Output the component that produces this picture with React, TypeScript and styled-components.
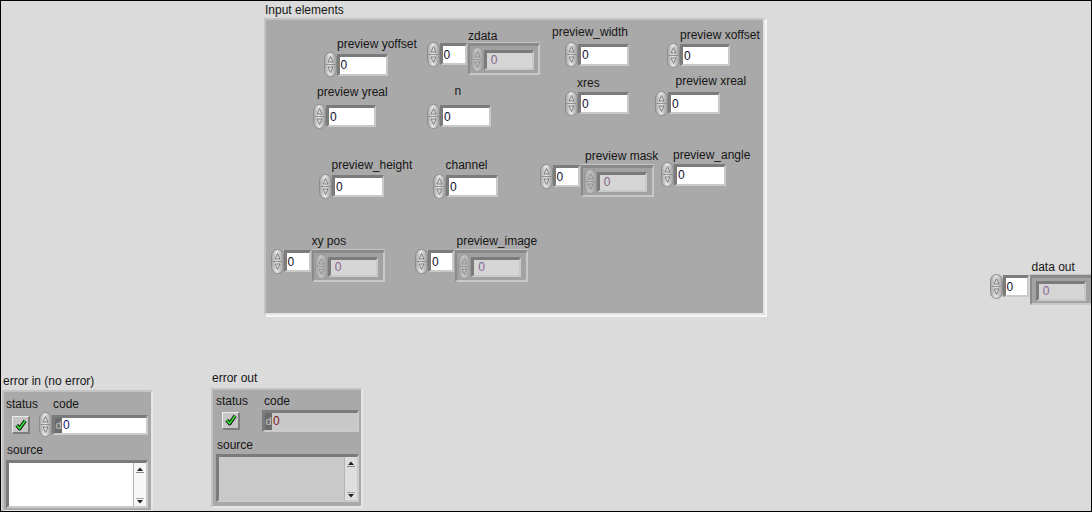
import styled, { createGlobalStyle } from "styled-components";

const GlobalStyle = createGlobalStyle`
  html, body {
    margin: 0;
    padding: 0;
    background: #dbdbdb;
  }
  body {
    font-family: "Liberation Sans", Arial, sans-serif;
  }
`;

const Window = styled.div`
  position: relative;
  width: 1092px;
  height: 512px;
  box-sizing: border-box;
  border: 1px solid #000;
  background: #dbdbdb;
  overflow: hidden;
  font-family: "Liberation Sans", Arial, sans-serif;
  font-size: 12px;
  color: #161616;
`;

// front panel objects sit on a free canvas, like LabVIEW does
const Placed = styled.div<{ $x: number; $y: number }>`
  position: absolute;
  left: ${(p) => p.$x}px;
  top: ${(p) => p.$y}px;
  display: flex;
  flex-direction: column;
  align-items: flex-start;
`;

const Caption = styled.span<{ $dx?: number; $gap?: number; $top?: number }>`
  display: block;
  line-height: 14px;
  white-space: nowrap;
  margin-left: ${(p) => p.$dx ?? 0}px;
  margin-top: ${(p) => p.$top ?? 0}px;
  margin-bottom: ${(p) => p.$gap ?? 0}px;
`;

const PanelFrame = styled.div<{ $w: number; $h: number }>`
  position: relative;
  box-sizing: border-box;
  width: ${(p) => p.$w}px;
  height: ${(p) => p.$h}px;
  background: #a9a9a9;
  border-style: solid;
  border-width: 2px;
  border-color: #c3c3c3 #e3e3e3 #e3e3e3 #c3c3c3;
  box-shadow: 2px 2px 0 #f6f6f6;
`;

const SpinRow = styled.div<{ $dx?: number; $dy?: number }>`
  display: flex;
  align-items: center;
  margin-left: ${(p) => p.$dx ?? 0}px;
  margin-top: ${(p) => p.$dy ?? 0}px;
`;

const ArrayRow = styled.div<{ $dx: number; $dy: number }>`
  display: flex;
  align-items: flex-start;
  gap: 1px;
  margin-left: ${(p) => p.$dx}px;
  margin-top: ${(p) => p.$dy}px;
`;

const ArrayFrame = styled.div<{ $w: number; $h: number; $pad: number }>`
  box-sizing: border-box;
  width: ${(p) => p.$w}px;
  height: ${(p) => p.$h}px;
  margin-top: 1.5px;
  flex-shrink: 0;
  display: flex;
  align-items: center;
  padding-left: ${(p) => p.$pad}px;
  background: #a2a2a2;
  border-style: solid;
  border-width: 3px 2px 2px 2px;
  border-color: #8a8a8a #c8c8c8 #c8c8c8 #8a8a8a;
  box-shadow: 0 -1px 0 #c2c2c2;
`;

const NumBox = styled.div<{ $w: number; $h?: number; $dim?: boolean }>`
  box-sizing: border-box;
  width: ${(p) => p.$w}px;
  height: ${(p) => p.$h ?? 22}px;
  flex-shrink: 0;
  display: flex;
  align-items: center;
  padding-left: 1px;
  border-style: solid;
  border-width: 3px 2px 2px 3px;
  border-color: #7b7b7b #c9c9c9 #c9c9c9 #7b7b7b;
  background: ${(p) => (p.$dim ? "#d5d5d5" : "#ffffff")};
  color: ${(p) => (p.$dim ? "#86638e" : "#10102e")};
  font-size: 12px;
`;

const SpinSvg = styled.svg<{ $dim?: boolean }>`
  display: block;
  flex-shrink: 0;
  opacity: ${(p) => (p.$dim ? 0.5 : 1)};
`;

const ClusterFrame = styled.div<{ $w: number; $h: number; $indicator?: boolean }>`
  box-sizing: border-box;
  width: ${(p) => p.$w}px;
  height: ${(p) => p.$h}px;
  background: #a9a9a9;
  border-style: solid;
  border-width: 2px;
  border-color: #c3c3c3 #e6e6e6 #e6e6e6 #c3c3c3;
  padding: ${(p) => (p.$indicator ? "4px 2px" : "5px 2px")};
`;

const TopRow = styled.div<{ $col: number }>`
  display: grid;
  grid-template-columns: ${(p) => p.$col}px 1fr;
  align-items: start;
`;

const Cell = styled.div`
  display: flex;
  flex-direction: column;
  align-items: flex-start;
`;

const CheckBox = styled.div<{ $dx: number; $dy: number }>`
  box-sizing: border-box;
  width: 18px;
  height: 18px;
  margin-left: ${(p) => p.$dx}px;
  margin-top: ${(p) => p.$dy}px;
  display: flex;
  align-items: center;
  justify-content: center;
  background: #c6c6c6;
  border-style: solid;
  border-width: 1px 2px 2px 1px;
  border-color: #ececec #7d7d7d #7d7d7d #ececec;
`;

const CodeBox = styled.div<{ $w: number; $h: number; $indicator?: boolean }>`
  box-sizing: border-box;
  width: ${(p) => p.$w}px;
  height: ${(p) => p.$h}px;
  display: flex;
  align-items: stretch;
  border-style: solid;
  border-width: 3px 2px 2px 3px;
  border-color: #7b7b7b #cbcbcb #cbcbcb #7b7b7b;
  background: ${(p) => (p.$indicator ? "#c8c8c8" : "#ffffff")};
`;

const Radix = styled.span`
  width: 7px;
  display: flex;
  align-items: center;
  justify-content: center;
  background: #6b6b6b;
  color: #c4c4c4;
  font-size: 11px;
`;

const CodeValue = styled.span<{ $indicator?: boolean }>`
  display: flex;
  align-items: center;
  padding-left: 1px;
  color: ${(p) => (p.$indicator ? "#7a1c1c" : "#141470")};
`;

const SourceBox = styled.div<{ $w: number; $h: number; $dx: number; $indicator?: boolean }>`
  box-sizing: border-box;
  width: ${(p) => p.$w}px;
  height: ${(p) => p.$h}px;
  margin-left: ${(p) => p.$dx}px;
  display: flex;
  justify-content: flex-end;
  border-style: solid;
  border-width: 3px 2px 2px 3px;
  border-color: #7b7b7b #cbcbcb #cbcbcb #7b7b7b;
  background: ${(p) => (p.$indicator ? "#c9c9c9" : "#ffffff")};
`;

const ScrollBar = styled.div<{ $indicator?: boolean }>`
  width: 13px;
  box-sizing: border-box;
  display: flex;
  flex-direction: column;
  justify-content: space-between;
  align-items: center;
  padding: 4px 0 2px;
  border-left: 1px solid #b4b4b4;
  background: ${(p) => (p.$indicator ? "#dedede" : "#f6f6f6")};
`;

function Spinner({ dim }: { dim?: boolean }) {
  return (
    <SpinSvg width="13" height="25" viewBox="0 0 13 25" $dim={dim}>
      <defs>
        <linearGradient id="spinFill" x1="0" y1="0" x2="1" y2="0">
          <stop offset="0" stopColor="#a4a4a4" />
          <stop offset="0.45" stopColor="#e8e8e8" />
          <stop offset="1" stopColor="#9a9a9a" />
        </linearGradient>
      </defs>
      <rect x="0.5" y="0.5" width="12" height="24" rx="6" fill="url(#spinFill)" stroke="#8c8c8c" />
      <path d="M1.5 12.5 H11.5" stroke="#909090" />
      <path d="M6.5 4.5 L9 10 H4 Z" fill="#dadada" stroke="#6a6a6a" strokeWidth="0.8" />
      <path d="M6.5 20.5 L9 15 H4 Z" fill="#dadada" stroke="#6a6a6a" strokeWidth="0.8" />
    </SpinSvg>
  );
}

function Check() {
  return (
    <svg width="12" height="12" viewBox="0 0 12 12">
      <path d="M1.8 6.2 L4.6 9.6 L10.2 1.8" fill="none" stroke="#0b0b0b" strokeWidth="3.6" strokeLinejoin="round" />
      <path d="M1.8 6.2 L4.6 9.6 L10.2 1.8" fill="none" stroke="#34e034" strokeWidth="1.8" strokeLinejoin="round" />
    </svg>
  );
}

function Arrow({ down }: { down?: boolean }) {
  return (
    <svg width="8" height="6" viewBox="0 0 8 6">
      {down ? (
        <>
          <path d="M0 0 H8" stroke="#8a8a8a" strokeWidth="1.5" />
          <path d="M1 2 H7 L4 5.5 Z" fill="#222" />
        </>
      ) : (
        <>
          <path d="M1 4 H7 L4 0.5 Z" fill="#222" />
          <path d="M0 5.5 H8" stroke="#8a8a8a" strokeWidth="1" />
        </>
      )}
    </svg>
  );
}

type Origin = { ox: number; oy: number };

type NumericSpec = {
  label: string;
  lx: number; // label left
  ly: number; // label line top
  sx: number; // spinner left
  by: number; // box top
  w: number;
};

function Numeric({ label, lx, ly, sx, by, w, ox, oy }: NumericSpec & Origin) {
  const left = Math.min(lx, sx);
  return (
    <Placed $x={left - ox} $y={ly - oy}>
      <Caption $dx={lx - left}>{label}</Caption>
      <SpinRow $dx={sx - left} $dy={by - 1.5 - (ly + 14)}>
        <Spinner />
        <NumBox $w={w}>0</NumBox>
      </SpinRow>
    </Placed>
  );
}

type ArraySpec = NumericSpec & { fw: number; fh: number; innerSpin?: boolean };

function ArrayControl({ label, lx, ly, sx, by, w, fw, fh, innerSpin = true, ox, oy }: ArraySpec & Origin) {
  const left = Math.min(lx, sx);
  return (
    <Placed $x={left - ox} $y={ly - oy}>
      <Caption $dx={lx - left}>{label}</Caption>
      <ArrayRow $dx={sx - left} $dy={by - 1.5 - (ly + 14)}>
        <SpinRow>
          <Spinner />
          <NumBox $w={w}>0</NumBox>
        </SpinRow>
        <ArrayFrame $w={fw} $h={fh} $pad={innerSpin ? 1 : 4}>
          {innerSpin && <Spinner dim />}
          <NumBox $w={50} $h={20} $dim>
            {"\u00a00"}
          </NumBox>
        </ArrayFrame>
      </ArrayRow>
    </Placed>
  );
}

type ErrorProps = { label: string; x: number; y: number; indicator?: boolean };

function ErrorCluster({ label, x, y, indicator }: ErrorProps) {
  return (
    <Placed $x={x - 1} $y={y - 1}>
      <Caption $dx={1} $gap={indicator ? 3 : 2}>
        {label}
      </Caption>
      <ClusterFrame $w={indicator ? 152 : 151} $h={indicator ? 120 : 122} $indicator={indicator}>
        <TopRow $col={indicator ? 47 : 33}>
          <Cell>
            <Caption $dx={indicator ? 1 : 0}>status</Caption>
            <CheckBox $dx={indicator ? 7 : 6} $dy={indicator ? 4 : 5}>
              <Check />
            </CheckBox>
          </Cell>
          <Cell>
            <Caption $dx={indicator ? 2 : 14}>code</Caption>
            <SpinRow $dy={indicator ? 2 : 1}>
              {!indicator && <Spinner />}
              <CodeBox $w={indicator ? 97 : 96} $h={indicator ? 22 : 20} $indicator={indicator}>
                <Radix>d</Radix>
                <CodeValue $indicator={indicator}>0</CodeValue>
              </CodeBox>
            </SpinRow>
          </Cell>
        </TopRow>
        <Caption $dx={indicator ? 2 : 1} $gap={indicator ? 2 : 3} $top={6}>
          source
        </Caption>
        <SourceBox $w={indicator ? 143 : 142} $h={48} $dx={indicator ? 1 : 0} $indicator={indicator}>
          <ScrollBar $indicator={indicator}>
            <Arrow />
            <Arrow down />
          </ScrollBar>
        </SourceBox>
      </ClusterFrame>
    </Placed>
  );
}

const numerics: NumericSpec[] = [
  { label: "preview yoffset", lx: 337, ly: 37, sx: 323.5, by: 53.5, w: 51 },
  { label: "preview_width", lx: 552, ly: 25, sx: 565, by: 43.5, w: 51 },
  { label: "preview xoffset", lx: 680, ly: 27.5, sx: 667, by: 44, w: 50 },
  { label: "preview yreal", lx: 317, ly: 85, sx: 313, by: 105, w: 50 },
  { label: "n", lx: 454.5, ly: 84, sx: 427, by: 105, w: 51 },
  { label: "xres", lx: 577, ly: 75.5, sx: 565, by: 92, w: 51 },
  { label: "preview xreal", lx: 675.5, ly: 73.5, sx: 655, by: 92, w: 52 },
  { label: "preview_height", lx: 331.5, ly: 158, sx: 319, by: 175, w: 52 },
  { label: "channel", lx: 445.5, ly: 158, sx: 433, by: 175, w: 52 },
  { label: "preview_angle", lx: 673, ly: 147.5, sx: 661, by: 163.5, w: 52 },
];

const arrays: ArraySpec[] = [
  { label: "zdata", lx: 468, ly: 29, sx: 426.5, by: 43, w: 27, fw: 72, fh: 32 },
  { label: "preview mask", lx: 585, ly: 149, sx: 539.5, by: 165, w: 27, fw: 73, fh: 32 },
  { label: "xy pos", lx: 311.5, ly: 234, sx: 270.5, by: 250, w: 27, fw: 73, fh: 32 },
  { label: "preview_image", lx: 456.5, ly: 234, sx: 415, by: 250, w: 26, fw: 73, fh: 32 },
];

// panel content origin in page pixels (panel left/top + its 2px border)
const PANEL = { ox: 266, oy: 20 };
const PAGE = { ox: 1, oy: 1 };

export default function App() {
  return (
    <>
      <GlobalStyle />
      <Window>
        <Placed $x={263} $y={1.5}>
          <Caption $dx={1} $gap={1.5}>
            Input elements
          </Caption>
          <PanelFrame $w={501} $h={297}>
            {numerics.map((n) => (
              <Numeric key={n.label} {...n} {...PANEL} />
            ))}
            {arrays.map((a) => (
              <ArrayControl key={a.label} {...a} {...PANEL} />
            ))}
          </PanelFrame>
        </Placed>

        <ArrayControl
          label="data out"
          lx={1031.5}
          ly={260}
          sx={989.5}
          by={275}
          w={26}
          fw={70}
          fh={30}
          innerSpin={false}
          {...PAGE}
        />

        <ErrorCluster label="error in (no error)" x={2} y={374} />
        <ErrorCluster label="error out" x={211} y={370.5} indicator />
      </Window>
    </>
  );
}
